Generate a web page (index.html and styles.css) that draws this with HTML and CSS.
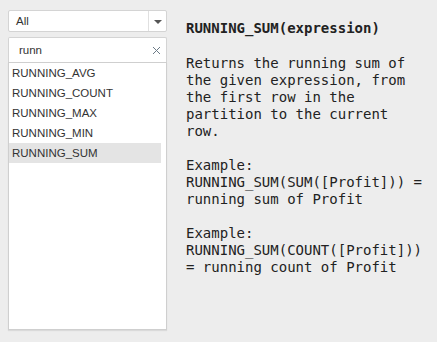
FILE: index.html
```html
<!DOCTYPE html>
<html lang="en">

<head>
  <meta charset="UTF-8" />
  <title>Functions</title>
  <link rel="stylesheet" href="styles.css">
</head>

<body>

  <div class="picker">
    <div class="category-select">
      <span class="category-value">All</span>
      <span class="category-arrow"></span>
    </div>

    <div class="search-box">
      <span class="search-text">runn</span>
      <svg class="search-clear" width="9" height="9" viewBox="0 0 9 9">
        <path d="M1 1 L8 8 M8 1 L1 8" stroke="#6b7a86" stroke-width="1" fill="none" />
      </svg>
    </div>

    <ul class="function-list">
      <li>RUNNING_AVG</li>
      <li>RUNNING_COUNT</li>
      <li>RUNNING_MAX</li>
      <li>RUNNING_MIN</li>
      <li class="selected">RUNNING_SUM</li>
    </ul>
  </div>

  <div class="doc">
    <div class="doc-title">RUNNING_SUM(expression)</div>
    <div class="doc-body">Returns the running sum of the given expression, from the first row in the partition to the current row.

Example:
RUNNING_SUM(SUM([Profit])) = running sum of Profit

Example:
RUNNING_SUM(COUNT([Profit])) = running count of Profit</div>
  </div>

</body>

</html>
```

FILE: styles.css
```css
body {
  margin: 0;
  background-color: #ededed;
  font-family: "Liberation Sans", Arial, sans-serif;
  color: #333;
  display: flex;
  padding: 10px 0 0 8px;
  height: 342px;
  box-sizing: border-box;
}

.picker {
  width: 159px;
  display: flex;
  flex-direction: column;
}

.category-select {
  height: 22px;
  background-color: white;
  border: 1px solid #d4d4d4;
  border-radius: 2px;
  display: flex;
  align-items: center;
  box-sizing: border-box;
}

.category-value {
  flex: 1;
  font-size: 11.5px;
  padding-left: 7px;
  color: #333;
}

.category-arrow {
  width: 17px;
  height: 100%;
  border-left: 1px solid #e0e0e0;
  display: flex;
  align-items: center;
  justify-content: center;
}

.category-arrow::after {
  content: "";
  border-left: 4px solid transparent;
  border-right: 4px solid transparent;
  border-top: 4px solid #555;
  margin-top: 1px;
}

.search-box {
  margin-top: 5px;
  height: 25px;
  background-color: white;
  border: 1px solid #d4d4d4;
  border-bottom: none;
  border-radius: 2px 2px 0 0;
  display: flex;
  align-items: center;
  box-sizing: border-box;
  padding: 0 5px 0 10px;
}

.search-text {
  flex: 1;
  font-size: 11.5px;
  color: #333;
}

.search-clear {
  display: block;
}

.function-list {
  list-style: none;
  margin: 0;
  padding: 0 5px 0 0;
  height: 268px;
  background-color: white;
  border: 1px solid #cfcfcf;
  box-shadow: 0 1px 1px rgba(0, 0, 0, 0.08);
  box-sizing: border-box;
}

.function-list li {
  height: 20px;
  line-height: 20px;
  font-size: 11.5px;
  padding-left: 3px;
  color: #333;
}

.function-list li.selected {
  background-color: #e4e4e4;
}

.doc {
  margin-left: 19px;
  width: 240px;
  font-family: "DejaVu Sans Mono", monospace;
  font-size: 14px;
  line-height: 17px;
  color: #222;
}

.doc-title {
  font-weight: bold;
  margin-top: 10px;
}

.doc-body {
  white-space: pre-wrap;
  margin-top: 18px;
}
```
